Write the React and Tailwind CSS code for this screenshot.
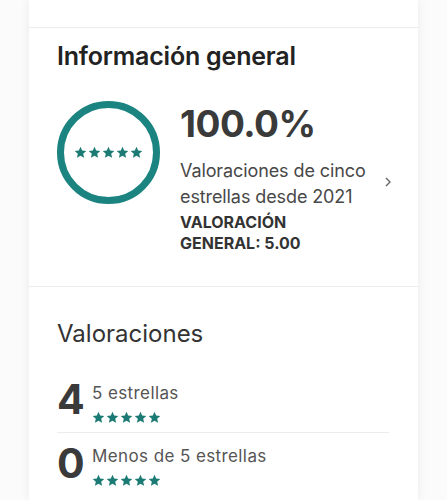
import React from "react";

const TEAL = "#1b7a74";

function Star({ size = 13, color = TEAL }) {
  return (
    <svg width={size} height={size} viewBox="0 0 24 24" aria-hidden="true">
      <path
        fill={color}
        d="M12 1.5l3.1 7 7.6.7-5.75 5.05 1.7 7.45L12 17.85l-6.65 3.85 1.7-7.45L1.3 9.2l7.6-.7z"
      />
    </svg>
  );
}

function Stars({ size = 13, gap = "gap-[1px]" }) {
  return (
    <div className={`flex ${gap}`}>
      {[0, 1, 2, 3, 4].map((i) => (
        <Star key={i} size={size} />
      ))}
    </div>
  );
}

export default function App() {
  return (
    <div
      className="h-[500px] w-[447px] overflow-hidden bg-[#fbfbfb]"
      style={{ fontFamily: "Inter, 'Noto Sans', sans-serif" }}
    >
      <div className="ml-[29px] w-[389px] h-full bg-white shadow-[0_0_10px_rgba(0,0,0,0.07)]">
        <div className="h-[28px] border-b border-[#ececec]" />

        {/* Información general */}
        <div className="pl-[28px] pr-[24px] pt-[13px] pb-[32px] border-b border-[#ececec]">
          <h2 className="text-[25px] leading-[30px] font-semibold text-[#222] tracking-[-0.2px]">
            Información general
          </h2>
          <div className="mt-[30px] flex items-start">
            <div className="w-[103px] h-[103px] shrink-0 rounded-full border-[7px] border-[#1b8480] flex items-center justify-center">
              <Stars size={13} gap="gap-[1px]" />
            </div>
            <div className="ml-[20px] flex-1 pt-[3px]">
              <div className="text-[37px] leading-[40px] font-bold text-[#3a3a3a] tracking-[-0.5px]">
                100.0%
              </div>
              <div className="mt-[14px] flex items-center">
                <div className="text-[18px] leading-[26px] text-[#484848] tracking-[-0.1px]">
                  Valoraciones de cinco
                  <br />
                  estrellas desde 2021
                </div>
                <svg
                  className="ml-auto mr-[1px] -mt-[5px]"
                  width="10"
                  height="12"
                  viewBox="0 0 10 12"
                  fill="none"
                >
                  <path d="M3 2l4 4-4 4" stroke="#666" strokeWidth="1.4" />
                </svg>
              </div>
              <div className="mt-[2px] text-[16px] leading-[21px] font-bold text-[#333]">
                VALORACIÓN
                <br />
                GENERAL: 5.00
              </div>
            </div>
          </div>
        </div>

        {/* Valoraciones */}
        <div className="pl-[28px] pr-[29px] pt-[32px]">
          <h2 className="text-[24px] leading-[30px] text-[#333]">Valoraciones</h2>
          <div className="mt-[30px] h-[54px] flex items-start border-b border-[#ececec]">
            <div className="w-[35px] text-[41px] leading-[40px] font-bold text-[#3a3a3a]">4</div>
            <div className="pt-[4px]">
              <div className="text-[17px] leading-[20px] text-[#555] tracking-[0.4px]">5 estrellas</div>
              <div className="mt-[8px]">
                <Stars size={13} gap="gap-[1px]" />
              </div>
            </div>
          </div>
          <div className="mt-[10px] flex items-start">
            <div className="w-[35px] text-[41px] leading-[40px] font-bold text-[#3a3a3a]">0</div>
            <div className="pt-[3px]">
              <div className="text-[17px] leading-[20px] text-[#555] tracking-[0.4px]">Menos de 5 estrellas</div>
              <div className="mt-[8px]">
                <Stars size={13} gap="gap-[1px]" />
              </div>
            </div>
          </div>
        </div>
      </div>
    </div>
  );
}
